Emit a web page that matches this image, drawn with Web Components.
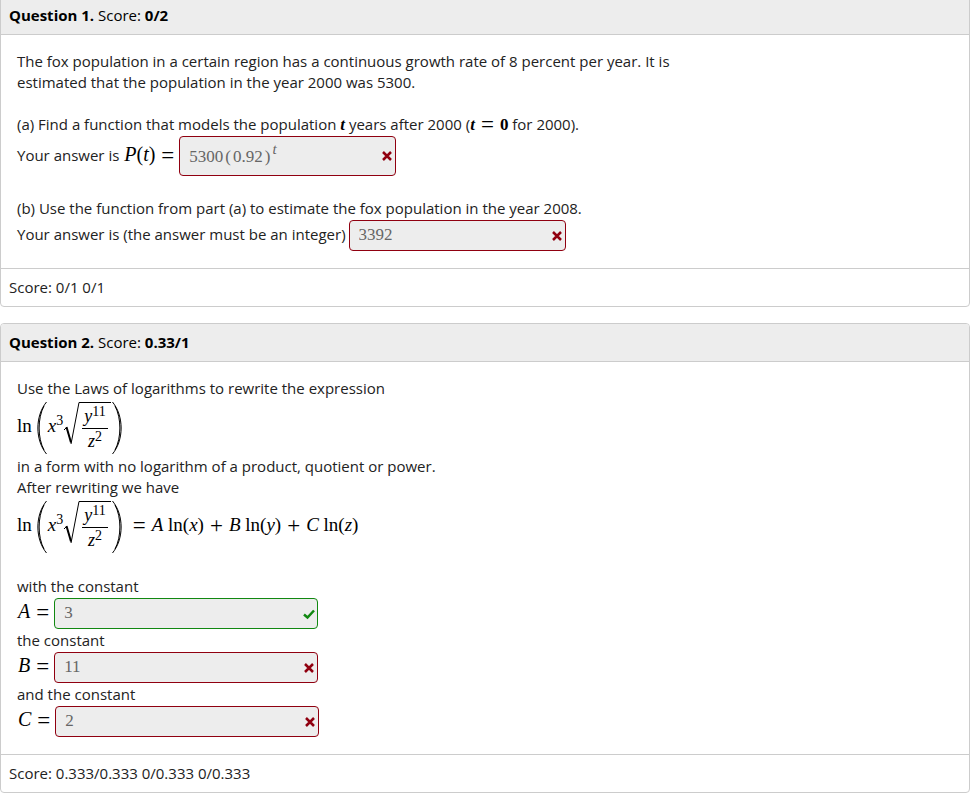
<!DOCTYPE html>
<html lang="en">
<head>
<meta charset="utf-8">
<meta name="viewport" content="width=device-width, initial-scale=1">
<title>Question review</title>
<style>
  body {
    margin: 0;
    background: #fff;
    color: #222;
    font: 15px/21px "Open Sans", sans-serif;
  }
</style>
</head>
<body>
<question-list>
  <question-panel>
    <b slot="title">Question 1.</b>
    <span slot="points">Score: <b>0/2</b></span>
    <text-line>The fox population in a certain region has a continuous growth rate of 8 percent per year. It is estimated that the population in the year 2000 was 5300.</text-line>
    <text-line blank></text-line>
    <text-line>(a) Find a function that models the population <tex-math bold><i>t</i></tex-math> years after 2000 (<tex-math bold><i>t</i><tex-op>=</tex-op>0</tex-math> for 2000).</text-line>
    <answer-row state="wrong" size="small" base="5300(0.92)" power="t">Your answer is <tex-math large><i>P</i>(<i>t</i>)<tex-op last>=</tex-op></tex-math></answer-row>
    <text-line blank></text-line>
    <text-line>(b) Use the function from part (a) to estimate the fox population in the year 2008.</text-line>
    <answer-row state="wrong" size="small" value="3392">Your answer is (the answer must be an integer)</answer-row>
    <span slot="footer">Score: 0/1 0/1</span>
  </question-panel>

  <question-panel>
    <b slot="title">Question 2.</b>
    <span slot="points">Score: <b>0.33/1</b></span>
    <text-line>Use the Laws of logarithms to rewrite the expression</text-line>
    <log-root></log-root>
    <text-line>in a form with no logarithm of a product, quotient or power.</text-line>
    <text-line>After rewriting we have</text-line>
    <log-root><tex-op>=</tex-op><i>A</i> ln(<i>x</i>)<tex-op>+</tex-op><i>B</i> ln(<i>y</i>)<tex-op>+</tex-op><i>C</i> ln(<i>z</i>)</log-root>
    <text-line blank></text-line>
    <text-line>with the constant</text-line>
    <answer-row state="right" value="3"><tex-math large><i>A</i><tex-op last>=</tex-op></tex-math></answer-row>
    <text-line>the constant</text-line>
    <answer-row state="wrong" value="11"><tex-math large><i>B</i><tex-op last>=</tex-op></tex-math></answer-row>
    <text-line>and the constant</text-line>
    <answer-row state="wrong" value="2"><tex-math large><i>C</i><tex-op last>=</tex-op></tex-math></answer-row>
    <span slot="footer">Score: 0.333/0.333 0/0.333 0/0.333</span>
  </question-panel>
</question-list>

<script>
window.customElements.define('question-list',
  class QuestionList extends HTMLElement {
    constructor() {
      super()
      this.attachShadow({ mode: "open" })
      this.shadowRoot.innerHTML = `
        <style>
          :host {
            display: flex;
            flex-direction: column;
            gap: 16px;
            margin: -4px 5px 0 0;
          }
        </style>
        <slot></slot>`
    }
  }
)

window.customElements.define('question-panel',
  class QuestionPanel extends HTMLElement {
    constructor() {
      super()
      this.attachShadow({ mode: "open" })
      this.shadowRoot.innerHTML = `
        <style>
          :host {
            display: block;
            border: 1px solid #ccc;
            border-radius: 4px;
            overflow: hidden;
          }
          header, footer {
            padding: 8px;
          }
          header {
            background: #ededed;
            border-bottom: 1px solid #ccc;
            color: #000;
          }
          footer {
            border-top: 1px solid #ccc;
          }
          .content {
            max-width: 660px;
            padding: 16px;
          }
        </style>
        <header><slot name="title"></slot> <slot name="points"></slot></header>
        <div class="content"><slot></slot></div>
        <footer><slot name="footer"></slot></footer>`
    }
  }
)

window.customElements.define('text-line',
  class TextLine extends HTMLElement {
    constructor() {
      super()
      this.attachShadow({ mode: "open" })
      this.shadowRoot.innerHTML = `
        <style>
          :host { display: block; }
          :host([blank]) { height: 21px; }
        </style>
        <slot></slot>`
    }
  }
)

// no whitespace round the slots of the inline elements, it would be drawn
window.customElements.define('tex-math',
  class TexMath extends HTMLElement {
    constructor() {
      super()
      this.attachShadow({ mode: "open" })
      this.shadowRoot.innerHTML = `<style>
          :host {
            color: #000;
            font-family: "Liberation Serif", serif;
            font-size: 17px;
            line-height: 1;
            white-space: nowrap;
          }
          :host([bold]) { font-weight: bold; }
          :host([large]) {
            font-size: 20px;
            margin-left: 1px;
          }
        </style><slot></slot>`
    }
  }
)

window.customElements.define('tex-op',
  class TexOp extends HTMLElement {
    constructor() {
      super()
      this.attachShadow({ mode: "open" })
      this.shadowRoot.innerHTML = `<style>
          :host {
            font-size: 23px;
            font-weight: normal;
            line-height: 0;
            margin: 0 6px;
            vertical-align: -2px;
          }
          :host([last]) { margin-right: 2px; }
        </style><slot></slot>`
    }
  }
)

// ln( x^3 sqrt(y^11 / z^2) ), followed by whatever is slotted in
window.customElements.define('log-root',
  class LogRoot extends HTMLElement {
    constructor() {
      super()
      this.attachShadow({ mode: "open" })
      this.shadowRoot.innerHTML = `
        <style>
          :host {
            display: flex;
            align-items: center;
            height: 57px;
            color: #000;
            font: 19px/20px "Liberation Serif", serif;
            white-space: nowrap;
          }
          svg {
            display: block;
            fill: none;
            stroke: currentColor;
          }
          .text { padding-bottom: 3px; }
          .fence { margin-left: 4px; }
          sup {
            font-size: 14px;
            line-height: 0;
            vertical-align: 7px;
          }
          .root {
            display: flex;
            align-items: flex-start;
            margin-bottom: 4px;
          }
          .frac {
            border-top: 1px solid;
            padding: 0 3px 0 2px;
            text-align: center;
          }
          .frac span {
            display: block;
            font-size: 18px;
            line-height: 18px;
            padding: 4px 2px 3px;
          }
          .frac .num { border-bottom: 1px solid; }
          .frac .den { padding: 3px 0 0; }
          .frac sup { vertical-align: 6px; }
          .rest { margin-left: 4px; }
        </style>
        <span class="text">ln</span>
        <svg class="fence" width="12" height="54" viewBox="0 0 12 54"><path d="M10.500 1C-1 15-1 39 10.500 53" /><path d="M8 5C1.500 17 1.500 37 8 49" /></svg>
        <span class="text"><i>x</i><sup>3</sup></span>
        <div class="root">
          <svg width="17" height="43" viewBox="0 0 17 43"><path d="M1 28L4 25" /><path stroke-width="2" d="M3.500 25L8 40.500" /><path d="M8 42L16 .5H17" /></svg>
          <div class="frac">
            <span class="num"><i>y</i><sup>11</sup></span>
            <span class="den"><i>z</i><sup>2</sup></span>
          </div>
        </div>
        <svg width="12" height="54" viewBox="0 0 12 54"><path d="M1.500 1C13 15 13 39 1.500 53" /><path d="M4 5C10.500 17 10.500 37 4 49" /></svg>
        <span class="text rest"><slot></slot></span>`
    }
  }
)

window.customElements.define('answer-row',
  class AnswerRow extends HTMLElement {
    constructor() {
      super()
      this.attachShadow({ mode: "open" })

      const right = this.getAttribute('state') === "right"
      const power = this.getAttribute('power')
      const value = this.getAttribute('value') || ""
      const base = (this.getAttribute('base') || "").replace(/[()]/g, '<span class="paren">$&</span>')

      // a plain input can't hold a superscript, so powers use a textbox role
      const field = power
        ? `<div class="field tall" role="textbox" aria-labelledby="label" aria-readonly="true" tabindex="0">${base}<sup>${power}</sup></div>`
        : `<input class="field" id="answer" type="text" value="${value}" readonly>`
      const icon = right
        ? `<svg viewBox="0 0 12 12"><path d="M1 6.500L4.500 9.500L11 2.500" /></svg>`
        : `<svg viewBox="0 0 12 12"><path d="M2 2L10 10M10 2L2 10" /></svg>`

      this.shadowRoot.innerHTML = `
        <style>
          :host {
            --mark: #900010;
            display: flex;
            align-items: center;
            gap: 3px;
            padding: 1px 0;
          }
          :host([state="right"]) { --mark: #118811; }
          label { padding-bottom: 3px; }
          .box {
            position: relative;
            width: 264px;
          }
          :host([size="small"]) .box { width: 217px; }
          .field {
            box-sizing: border-box;
            display: block;
            width: 100%;
            height: 31px;
            margin: 0;
            padding: 0 20px 2px 9px;
            border: 1px solid var(--mark);
            border-radius: 4px;
            background: #ededed;
            color: #666;
            font: 17px/28px "Liberation Serif", serif;
          }
          .tall {
            height: 40px;
            padding-top: 6px;
          }
          .paren { margin: 0 2px; }
          sup {
            font-size: 15px;
            font-style: italic;
            line-height: 0;
            vertical-align: 8px;
          }
          svg {
            position: absolute;
            right: 3px;
            top: calc(50% - 6px);
            width: 12px;
            height: 12px;
            fill: none;
            stroke: var(--mark);
            stroke-width: 2.500;
          }
        </style>
        <label id="label" for="answer"><slot></slot></label>
        <div class="box">${field}${icon}</div>`
    }
  }
)
</script>
</body>
</html>
